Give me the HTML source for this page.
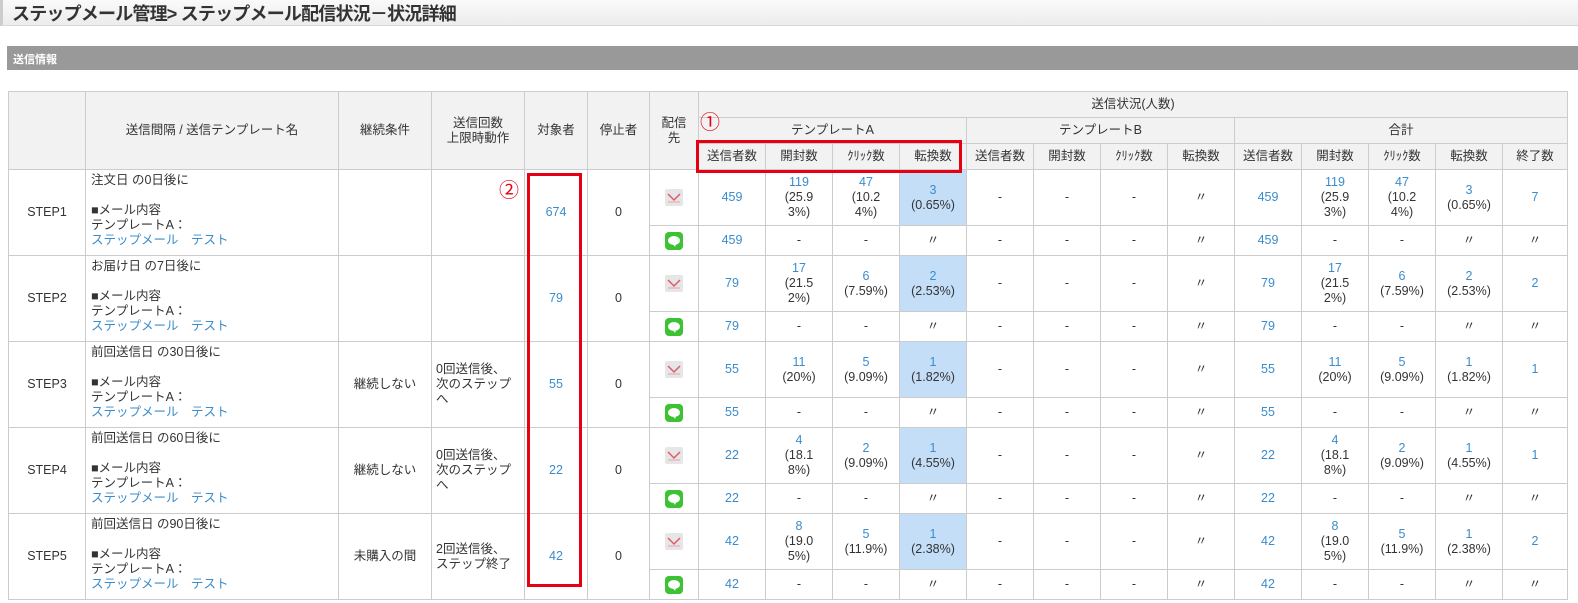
<!DOCTYPE html>
<html><head><meta charset="utf-8">
<style>
*{margin:0;padding:0;box-sizing:border-box}
body{width:1578px;height:603px;background:#fff;font-family:"Liberation Sans","Noto Sans CJK JP",sans-serif;font-size:12.5px;color:#333;position:relative;overflow:hidden}
.title{position:absolute;left:0;top:0;width:1578px;height:26px;background:linear-gradient(#fafafa,#ececec);border-bottom:1px solid #d8d8d8;border-left:3px solid #ccc}
.title span{position:absolute;left:9px;top:0px;font-size:18px;font-weight:bold;color:#333;letter-spacing:-0.8px}
.sec{position:absolute;left:7px;top:46px;width:1571px;height:24px;background:#999;color:#fff;font-weight:bold;font-size:11px;padding:5px 6px}
table{position:absolute;left:8px;top:91px;border-collapse:collapse;table-layout:fixed;width:1559px}
td,th{border:1px solid #ccc;text-align:center;vertical-align:middle;font-weight:normal;line-height:15px}
th{background:#f2f2f2;height:26px}
.b{color:#3a8ccc}
.hl{background:#c4def8}
.l{text-align:left;vertical-align:top;padding:3px 5px;line-height:15px}
svg{vertical-align:middle}
.rb{position:absolute;border:3px solid #e60012}
.c{position:absolute;color:#e60012;font-size:20px;line-height:20px}
</style></head><body>
<div class="title"><span>ステップメール管理&gt; ステップメール配信状況－状況詳細</span></div>
<div class="sec">送信情報</div>
<table>
<colgroup>
<col style="width:77px"><col style="width:253px"><col style="width:93px"><col style="width:93px"><col style="width:63px"><col style="width:62px"><col style="width:49px">
<col style="width:67px"><col style="width:67px"><col style="width:67px"><col style="width:67px"><col style="width:67px"><col style="width:67px"><col style="width:67px"><col style="width:67px"><col style="width:67px"><col style="width:67px"><col style="width:67px"><col style="width:67px"><col style="width:65px">
</colgroup>
<tr><th rowspan="3"></th><th rowspan="3">送信間隔 / 送信テンプレート名</th><th rowspan="3">継続条件</th><th rowspan="3">送信回数<br>上限時動作</th><th rowspan="3">対象者</th><th rowspan="3">停止者</th><th rowspan="3">配信<br>先</th><th colspan="13">送信状況(人数)</th></tr>
<tr><th colspan="4">テンプレートA</th><th colspan="4">テンプレートB</th><th colspan="5">合計</th></tr>
<tr><th>送信者数</th><th>開封数</th><th>ｸﾘｯｸ数</th><th>転換数</th><th>送信者数</th><th>開封数</th><th>ｸﾘｯｸ数</th><th>転換数</th><th>送信者数</th><th>開封数</th><th>ｸﾘｯｸ数</th><th>転換数</th><th>終了数</th></tr>
</table>
<script>
var data=[
["STEP1","注文日 の0日後に","","","674","459",["119","(25.9<br>3%)"],["47","(10.2<br>4%)"],["3","(0.65%)"],"7"],
["STEP2","お届け日 の7日後に","","","79","79",["17","(21.5<br>2%)"],["6","(7.59%)"],["2","(2.53%)"],"2"],
["STEP3","前回送信日 の30日後に","継続しない","0回送信後、<br>次のステップ<br>へ","55","55",["11","(20%)"],["5","(9.09%)"],["1","(1.82%)"],"1"],
["STEP4","前回送信日 の60日後に","継続しない","0回送信後、<br>次のステップ<br>へ","22","22",["4","(18.1<br>8%)"],["2","(9.09%)"],["1","(4.55%)"],"1"],
["STEP5","前回送信日 の90日後に","未購入の間","2回送信後、<br>ステップ終了","42","42",["8","(19.0<br>5%)"],["5","(11.9%)"],["1","(2.38%)"],"2"]];
var mail='<svg width="18" height="17"><rect width="18" height="17" rx="2" fill="#e6e6e6"/><path d="M3 5 L9 11 L15 5" stroke="#e05a6a" stroke-width="1.5" fill="none"/><path d="M3 13 H15" stroke="#e9a0a8" stroke-width="1"/></svg>';
var line='<svg width="18" height="18"><rect width="18" height="18" rx="4" fill="#3cc232"/><ellipse cx="9" cy="8.5" rx="6" ry="4.5" fill="#fff"/><path d="M8 12 L10 15 L11 12Z" fill="#fff"/></svg>';
var t=document.querySelector('table'),h='';
function v(p){return '<span class="b">'+p[0]+'</span><br>'+p[1];}
data.forEach(function(d){
h+='<tr style="height:56px"><td rowspan="2">'+d[0]+'</td><td rowspan="2" class="l">'+d[1]+'<br><br>■メール内容<br>テンプレートA：<br><span class="b">ステップメール　テスト</span></td><td rowspan="2">'+d[2]+'</td><td rowspan="2" style="text-align:left;padding-left:4px">'+d[3]+'</td><td rowspan="2" class="b">'+d[4]+'</td><td rowspan="2">0</td><td>'+mail+'</td><td class="b">'+d[5]+'</td><td>'+v(d[6])+'</td><td>'+v(d[7])+'</td><td class="hl">'+v(d[8])+'</td><td>-</td><td>-</td><td>-</td><td>〃</td><td class="b">'+d[5]+'</td><td>'+v(d[6])+'</td><td>'+v(d[7])+'</td><td>'+v(d[8])+'</td><td class="b">'+d[9]+'</td></tr>';
h+='<tr style="height:30px"><td>'+line+'</td><td class="b">'+d[5]+'</td><td>-</td><td>-</td><td>〃</td><td>-</td><td>-</td><td>-</td><td>〃</td><td class="b">'+d[5]+'</td><td>-</td><td>-</td><td>〃</td><td>〃</td></tr>';
});
t.insertAdjacentHTML('beforeend',h);
</script>
<div class="rb" style="left:696px;top:140px;width:266px;height:33px"></div>
<div class="rb" style="left:527px;top:173px;width:55px;height:414px"></div>
<div class="c" style="left:700px;top:113px">①</div>
<div class="c" style="left:499px;top:181px">②</div>
</body></html>
